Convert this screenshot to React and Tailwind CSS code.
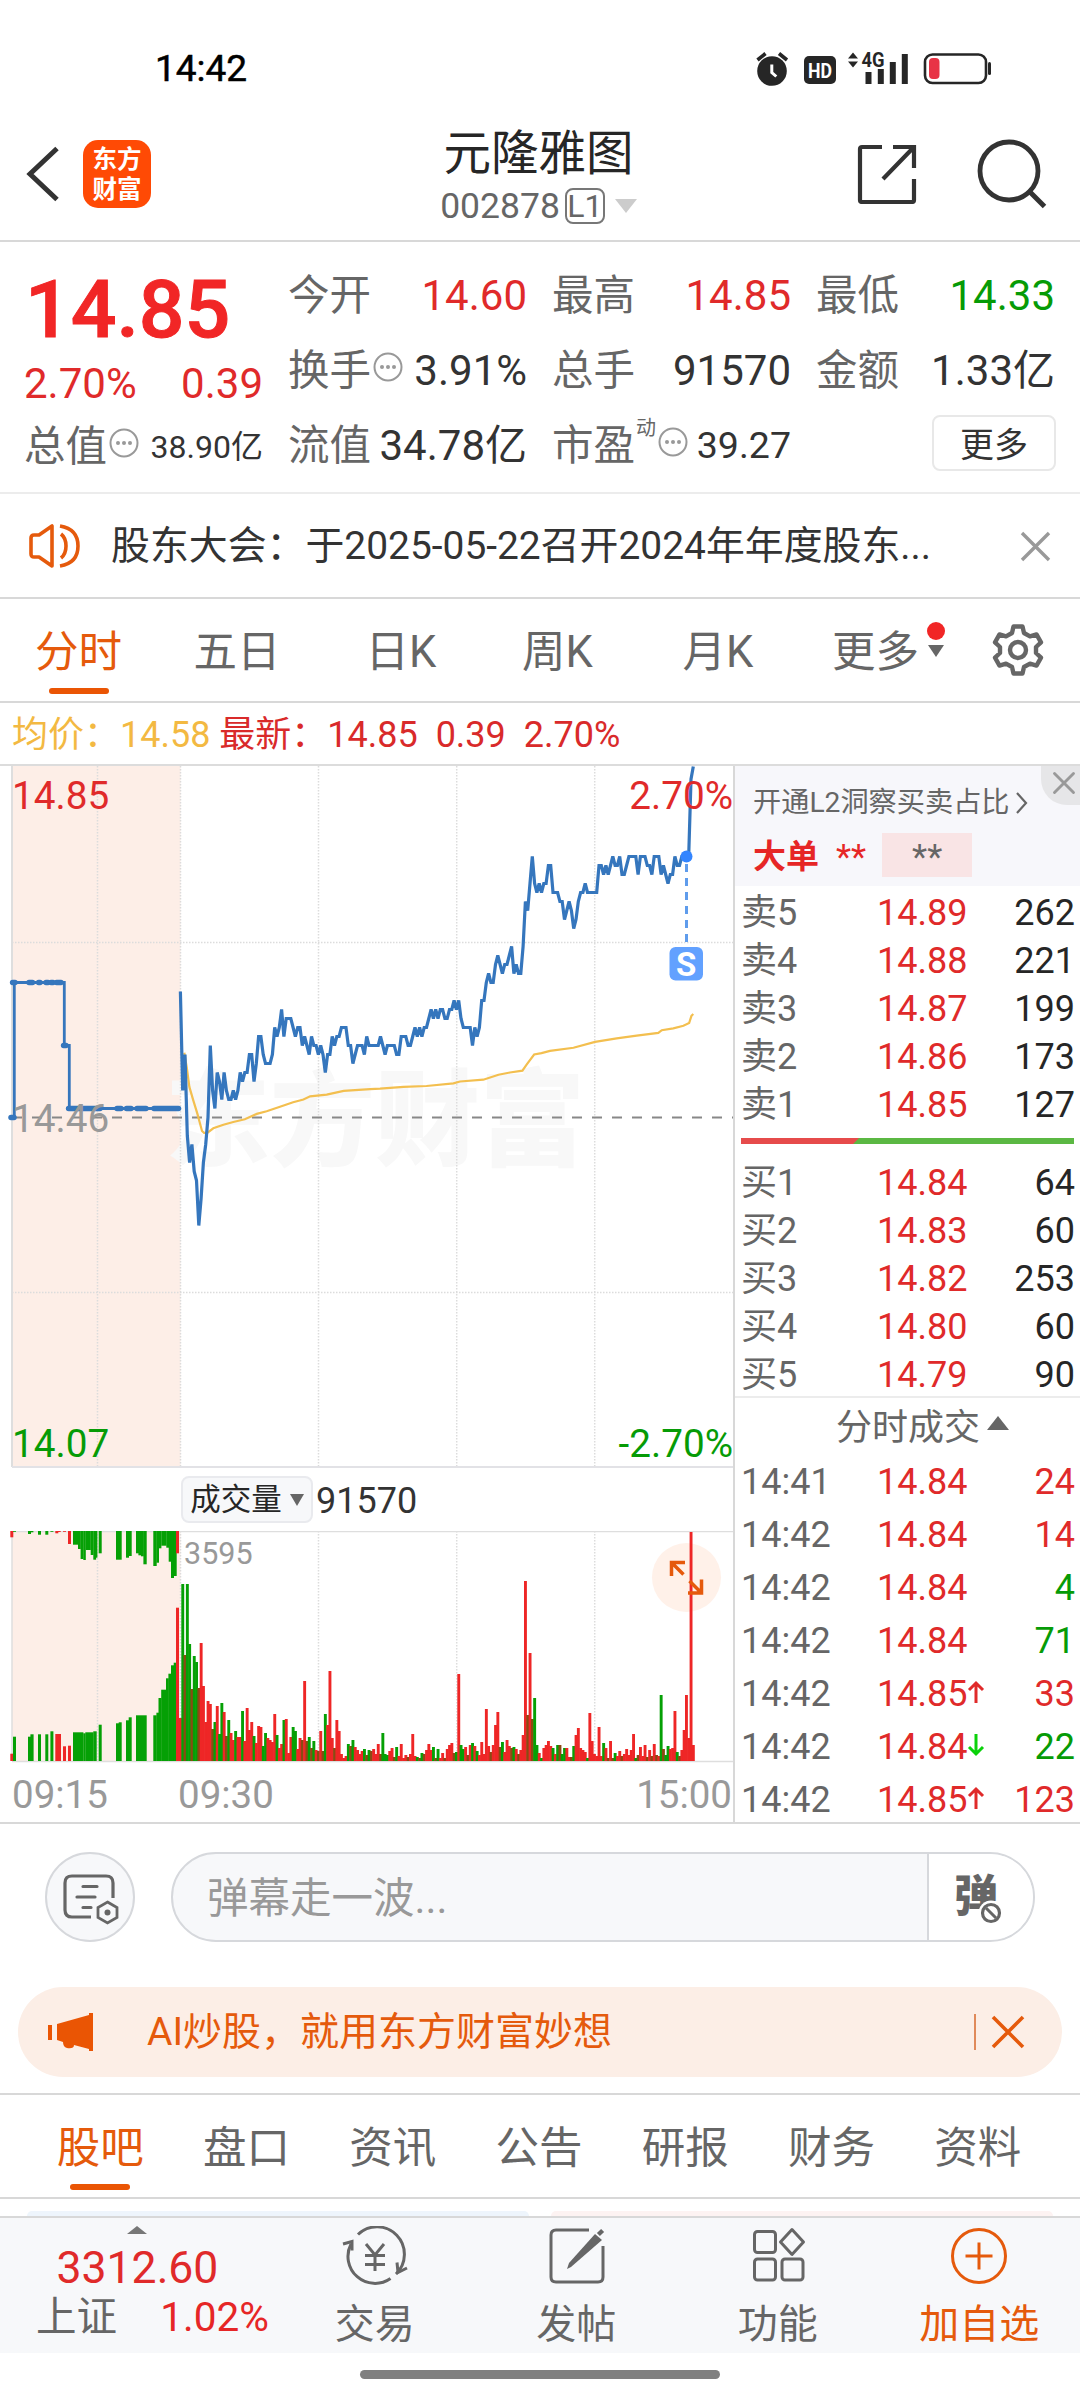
import { FiX } from 'react-icons/fi'

const quoteColumns = [
  [
    { label: '今开', value: '14.60', color: 'text-[#e02a2a]' },
    { label: '换手', value: '3.91%', color: 'text-[#333]', info: true },
    { label: '流值', value: '34.78亿', color: 'text-[#333]' },
  ],
  [
    { label: '最高', value: '14.85', color: 'text-[#e02a2a]' },
    { label: '总手', value: '91570', color: 'text-[#333]' },
    { label: '市盈', value: '39.27', color: 'text-[#333]', info: true, sup: '动', small: true },
  ],
  [
    { label: '最低', value: '14.33', color: 'text-[#069b06]' },
    { label: '金额', value: '1.33亿', color: 'text-[#333]' },
  ],
]

const asks = [
  ['卖5', '14.89', '262'],
  ['卖4', '14.88', '221'],
  ['卖3', '14.87', '199'],
  ['卖2', '14.86', '173'],
  ['卖1', '14.85', '127'],
]

const bids = [
  ['买1', '14.84', '64'],
  ['买2', '14.83', '60'],
  ['买3', '14.82', '253'],
  ['买4', '14.80', '60'],
  ['买5', '14.79', '90'],
]

const trades = [
  { time: '14:41', price: '14.84', volume: '24', buy: true },
  { time: '14:42', price: '14.84', volume: '14', buy: true },
  { time: '14:42', price: '14.84', volume: '4' },
  { time: '14:42', price: '14.84', volume: '71' },
  { time: '14:42', price: '14.85', volume: '33', buy: true, move: 'up' },
  { time: '14:42', price: '14.84', volume: '22', move: 'down' },
  { time: '14:42', price: '14.85', volume: '123', buy: true, move: 'up' },
]

// price per minute, in cents above the previous close
const ticks = [
  14, 3, 7, -2, -5, -3, -6, -7, -12, -9, -5, -3, 0, 8, 3, 1, 5, 4, 2, 5, 3, 2, 2, 3, 2, 3, 5, 4, 5, 5,
  7, 7, 4, 6, 9, 9, 7, 6, 6, 6, 7, 10, 9, 10, 12, 9, 11, 11, 11, 10, 9, 10, 10, 8, 9, 8, 7, 9, 8, 8,
  7, 8, 7, 5, 7, 7, 9, 8, 9, 9, 10, 10, 10, 8, 8, 6, 7, 8, 8, 8, 7, 9, 8, 8, 8, 8, 8, 9, 8, 7,
  8, 8, 8, 8, 7, 7, 9, 9, 9, 8, 8, 9, 10, 9, 10, 9, 10, 10, 11, 12, 11, 12, 11, 12, 12, 11, 11, 12, 12, 13,
  12, 13, 11, 10, 10, 10, 10, 8, 10, 9, 10, 13, 13, 15, 16, 15, 15, 17, 18, 17, 16, 17, 17, 18, 19, 16, 17, 16, 16, 19,
  24, 23, 26, 29, 26, 25, 26, 25, 26, 26, 28, 28, 25, 25, 25, 24, 24, 22, 23, 24, 23, 21, 22, 24, 25, 25, 26, 25, 25, 25,
  25, 25, 28, 28, 27, 28, 27, 28, 29, 28, 28, 29, 27, 27, 28, 29, 29, 29, 29, 27, 29, 29, 29, 28, 28, 27, 29, 29, 29, 27,
  28, 27, 26, 27, 27, 29, 28, 28, 29, 29, 29, 29, 37.6, 39,
]

const average = [
  [1.7, 7.2], [2.8, 5.5], [3.9, 3.4], [5.6, 1.9], [7.4, 0.4], [9.4, -1.5], [10.3, -1.7], [11.7, -1.7],
  [14.3, -1.2], [18.7, -0.8], [23, -0.5], [28, -0.2], [33.2, 0.4], [37.5, 0.7], [43.3, 1.2], [49, 1.7],
  [53.5, 2], [56.4, 2.35], [63.6, 2.55], [71, 2.95], [82.5, 3.15], [86.8, 3.2], [97, 3.4], [107, 3.5],
  [118.7, 3.8], [121.6, 4], [131.7, 4.2], [138.3, 4.75], [143.3, 5], [148.7, 5.2], [150.6, 5.9],
  [153.8, 7], [157, 7.15], [160.7, 7.4], [170.9, 7.75], [180.3, 8.4], [189.7, 8.8], [198.4, 9.1],
  [207.8, 9.4], [209.3, 9.7], [214.3, 9.9], [218.7, 10.2], [221.2, 10.5], [222.2, 11.3], [223, 11.5],
]

// r = up, g = down, b = down bar partly covered by its neighbour
const volumes =
  'r43 g177 b106 g177 g117 b72 g105 g99 b73 r118 r75 r39 r60 r57 b32 g39 r55 g27 g58 r49 b25 g41 r28 r21 g30 r24 r24 g50 r20 r53 ' +
  'r31 r39 g25 r18 r35 r34 g15 g28 r23 r21 r19 r47 g26 r13 r17 g41 r42 r8 r24 g34 g30 r12 r23 b21 r80 b20 g24 b13 g20 r11 ' +
  'b10 r30 b10 g47 r36 r90 r23 b13 r41 r30 r7 r3 r5 g17 b15 g21 r14 r11 r7 r10 g12 b6 g11 b10 r12 r7 r17 b7 g28 g7 ' +
  'g6 r10 r13 b4 g14 r5 r17 r3 r6 b4 r7 r27 r5 g4 b3 g8 b7 r11 r17 r11 g14 b3 g12 r3 r8 b3 r12 r16 r18 b8 ' +
  'g9 r87 g16 g12 r14 b6 r16 g18 r15 g10 r6 r19 r7 r52 r15 b9 r16 r36 r49 b14 g19 r9 r21 r15 b13 g14 r12 b7 r11 r26 ' +
  'r180 b46 r108 b42 g63 g16 r8 g3 r13 r16 r20 r15 g13 r7 g16 b16 g7 g13 r13 r4 b4 g15 r26 r33 r13 r11 r9 g3 r48 r20 ' +
  'r7 r5 r34 r5 g18 r13 b3 r20 b3 g8 r5 r10 b5 r7 r12 r6 r11 r27 g3 b6 r14 r5 r16 b4 r11 b5 r17 b6 r5 g66 ' +
  'b12 g6 g15 r12 r13 r50 g9 b5 r11 r31 r66 r23 r229 r16'

const barColors = { r: '#ee2626', g: '#05a005', b: '#8b4a12' }

// call auction bars: [color, x, width, height]
const auctionMatched = [
  ['r', 10.3, 3, 7.3], ['g', 13, 3, 24.3], ['g', 28, 3, 24.3], ['g', 30.4, 3.2, 26.7], ['g', 38, 3, 26.7],
  ['g', 45.3, 3, 26.7], ['g', 50.4, 3, 29.7], ['r', 55.3, 5.7, 27], ['r', 63, 3, 14.7], ['r', 68, 3, 15.3],
  ['g', 73, 10.4, 28.7], ['g', 83.3, 2.2, 27.7], ['g', 85.3, 8.2, 28.7], ['g', 93.3, 3.4, 29.7],
  ['g', 98.7, 3, 36.3], ['g', 116, 3, 37.7], ['g', 118.7, 3, 38.7], ['g', 126, 3, 40.7], ['g', 128.7, 3, 43.7],
  ['g', 136, 10.7, 45.7], ['g', 153.3, 3.4, 45.7], ['g', 156.4, 2.6, 48.3], ['g', 158.5, 3, 63],
  ['g', 161.2, 5, 71.3], ['g', 166, 2.8, 82.7], ['g', 168.4, 3, 87.3], ['g', 171, 3, 95.7],
  ['g', 173.7, 2.8, 98.3], ['r', 176, 3, 153.3],
]

const auctionUnmatched = [
  ['r', 10.3, 3, 6.3], ['g', 13, 3, 0.8], ['g', 28, 3, 3], ['g', 30.4, 3, 1.3], ['g', 38, 3, 3.7],
  ['g', 45.3, 3, 3.7], ['g', 50.4, 3, 0.8], ['r', 55.3, 3, 2.3], ['r', 58, 2.7, 1], ['r', 63, 3, 0.8],
  ['r', 68, 3, 13], ['g', 73, 5.2, 13.7], ['g', 78, 2.8, 18], ['g', 80.6, 2.9, 28], ['g', 83.3, 2.5, 29],
  ['g', 85.7, 5.1, 19], ['g', 90.7, 2.8, 24], ['g', 93.3, 2.8, 28.7], ['g', 96, 1.4, 26.7],
  ['g', 98.7, 3, 22.3], ['g', 116, 5.7, 28.7], ['g', 126, 3, 26.7], ['g', 128.7, 3, 25],
  ['g', 136, 3, 22.3], ['g', 138.4, 2.8, 24.3], ['g', 141, 2.8, 25.3], ['g', 143.4, 3.3, 33.3],
  ['g', 153.3, 3.4, 35], ['g', 156.4, 2.6, 31.7], ['g', 158.6, 2.8, 17.3], ['g', 161.3, 5.2, 14.7],
  ['g', 166.3, 2.8, 16.7], ['g', 168.7, 2.8, 30.7], ['g', 171, 3, 47], ['g', 173.7, 3, 45], ['r', 176, 3, 22.3],
]

// thick parts of the auction line, where an order was matched: [x1, x2, cents]
const auctionDots = [
  [12.6, 15, 15], [29, 32.5, 15], [38.6, 40, 15], [46, 48, 15], [51, 53, 15], [56.5, 61, 15],
  [63.6, 66, 8], [68.6, 100, 1], [117, 121, 1], [126.5, 131, 1], [137, 146, 1], [154, 178.5, 1],
  [11, 14, 0],
]

const toX = (minute) => 180.4 + minute * 2.3
const toY = (cents) => 351.5 - cents * 9

const pricePoints = ticks.map((t, i) => `${toX(i)},${toY(t)}`).join(' ')
const averagePoints = average.map(([m, t]) => `${toX(m)},${toY(t)}`).join(' ')

function StatusBar() {
  return (
    <div className="flex h-28 items-end justify-between pb-6 pl-[155px] pr-[88px]">
      <div className="text-[37px] leading-[38px] text-black [-webkit-text-stroke:0.5px_black]">14:42</div>
      <svg width="236" height="38" viewBox="756 50 236 38" className="text-[#262626]">
        <circle cx="772" cy="71" r="14.800" fill="currentColor" />
        <path d="M757.500 60l8-6.500M779 53.500l8 6.500" stroke="currentColor" strokeWidth="3.6" />
        <path d="M771.800 64.500v8l4.500 4" fill="none" stroke="#fff" strokeWidth="3" />
        <rect x="804" y="56" width="32" height="28" rx="5" fill="currentColor" />
        <text x="808" y="77.500" fontSize="21" fontWeight="700" textLength="24" lengthAdjust="spacingAndGlyphs" fill="#fff">HD</text>
        <path d="M848 58.500l5-6 5 6zM848 61.500l5 6 5-6z" fill="currentColor" />
        <text x="861.500" y="67" fontSize="20" fontWeight="700" textLength="23" lengthAdjust="spacingAndGlyphs" fill="currentColor">4G</text>
        <path d="M868.500 72v12M880.800 69v15M892.800 62v22M904.800 54v30" stroke="currentColor" strokeWidth="6" />
        <rect x="925" y="54.500" width="61" height="28.500" rx="7.500" fill="#fff" stroke="currentColor" strokeWidth="2.600" />
        <rect x="929" y="58" width="10.500" height="21" rx="4" fill="#e83346" />
        <path d="M989.500 63.500v10" stroke="currentColor" strokeWidth="3" strokeLinecap="round" />
      </svg>
    </div>
  )
}

function Header() {
  return (
    <header className="flex h-[130px] items-center justify-between border-b-2 border-[#d8d8d8] pl-[26px] pr-[33px]">
      <div className="flex w-[200px] items-center pb-1">
        <svg width="34" height="56" viewBox="0 0 34 56" fill="none" stroke="#333" strokeWidth="5">
          <path d="M31 2.500L4 28l27 25.500" />
        </svg>
        <div className="ml-[23px] flex h-[68px] w-[68px] flex-col items-center justify-center rounded-[15px] bg-[#ff4a05] pt-[2px] text-[24.5px] font-bold leading-[30px] text-white">
          <span>东方</span>
          <span>财富</span>
        </div>
      </div>
      <div className="flex flex-col items-center pl-1 pt-[2px]">
        <div className="text-[47.5px] leading-[58px] text-[#262626]">元隆雅图</div>
        <div className="flex items-center text-[35.5px] leading-[46px] text-[#666]">
          002878
          <span className="ml-[5px] flex h-9 w-10 items-center justify-center rounded-lg border-2 border-[#777] text-[32px] leading-none">L1</span>
          <span className="ml-[10px] border-x-[11px] border-t-[14px] border-x-transparent border-t-[#ccc]"></span>
        </div>
      </div>
      <div className="flex w-[200px] items-center justify-end pb-1">
        <svg width="60" height="60" viewBox="0 0 60 60" fill="none" stroke="#333" strokeWidth="4.200">
          <path d="M25 3H5Q3 3 3 5v51q0 2 2 2h50q2 0 2-2V35M36 3h21v21M57 3L26 35" />
        </svg>
        <svg width="70" height="70" viewBox="0 0 70 70" fill="none" stroke="#333" strokeWidth="4.800" className="ml-[60px]">
          <circle cx="32" cy="32" r="29" />
          <path d="M52.500 52.500l15 15" strokeWidth="5" />
        </svg>
      </div>
    </header>
  )
}

function InfoDots() {
  return (
    <svg width="30" height="30" viewBox="0 0 30 30" className="mb-[8px] shrink-0">
      <circle cx="15" cy="15" r="13.500" fill="none" stroke="#999" strokeWidth="2" />
      <circle cx="9" cy="15" r="2" fill="#999" />
      <circle cx="15" cy="15" r="2" fill="#999" />
      <circle cx="21" cy="15" r="2" fill="#999" />
    </svg>
  )
}

function QuoteCell({ cell }) {
  return (
    <div className="flex h-[75px] items-center leading-none">
      <span className="-ml-px pt-px text-[41.5px] text-[#666]">{cell.label}</span>
      {cell.sup && <span className="mb-9 ml-px text-[20px] text-[#666]">{cell.sup}</span>}
      {cell.info && <span className="ml-[2px]"><InfoDots /></span>}
      <span className={`ml-auto ${cell.small ? 'text-[37.500px]' : 'text-[42px]'} ${cell.color}`}>{cell.value}</span>
    </div>
  )
}

function Quote() {
  return (
    <section className="grid h-[252px] grid-cols-4 gap-x-[26px] border-b-2 border-[#ececec] px-[25px] pt-[16px]">
      <div>
        <div className="flex h-[100px] items-center pt-1 text-[80.500px] font-medium leading-none text-[#f12626] [-webkit-text-stroke:1px_#f12626]">14.85</div>
        <div className="flex h-[51px] items-center justify-between text-[42px] leading-none text-[#e02a2a]">
          <span className="-ml-px">2.70%</span>
          <span>0.39</span>
        </div>
        <div className="flex h-[75px] items-center leading-none">
          <span className="-ml-px pt-px text-[41.5px] text-[#666]">总值</span>
          <span className="ml-[2px]"><InfoDots /></span>
          <span className="ml-auto text-[32px] text-[#333]">38.90亿</span>
        </div>
      </div>
      {quoteColumns.map((cells, i) => (
        <div key={i}>
          {cells.map((cell) => (
            <QuoteCell key={cell.label} cell={cell} />
          ))}
          {i === 2 && (
            <button className="-mr-px ml-auto mt-[7px] block h-[56px] w-[124px] rounded-lg border-2 border-[#e8e8e8] pt-[3px] text-[34px] leading-none text-[#333]">
              更多
            </button>
          )}
        </div>
      ))}
    </section>
  )
}

function Notice() {
  return (
    <section className="flex h-[105px] items-center border-b-2 border-[#d8d8d8] pl-[29px] pr-[28px]">
      <svg width="52" height="46" viewBox="0 0 52 46" fill="none" stroke="#e55a0c" strokeWidth="3.600">
        <path d="M23 3v40L10 34H5q-3 0-3-3V15q0-3 3-3h5z" strokeLinejoin="round" />
        <path d="M32 11q5 4 5 12t-5 12" />
        <path d="M31 3q18 3 18 20T31 43" />
      </svg>
      <span className="ml-[30px] whitespace-nowrap pt-[2px] text-[38.900px] leading-none text-[#333]">
        股东大会：于2025-05-22召开2024年年度股东...
      </span>
      <svg width="34" height="34" viewBox="0 0 34 34" stroke="#999" strokeWidth="3.400" className="ml-auto">
        <path d="M4 4l27 27M31 4L4 31" />
      </svg>
    </section>
  )
}

function ChartTabs() {
  return (
    <nav className="flex h-[104px] items-center border-b-2 border-[#d8d8d8] text-[43.500px] leading-none text-[#666]">
      <div className="relative flex h-full w-[157px] items-center justify-center pt-[5px] text-[#e55a0c]">
        分时
        <span className="absolute bottom-[7px] h-[6px] w-[60px] rounded-full bg-[#ea5504]"></span>
      </div>
      <div className="w-[160px] pt-[5px] text-center">五日</div>
      <div className="w-[168px] pt-[5px] text-center">日K</div>
      <div className="w-[145px] pt-[5px] text-center">周K</div>
      <div className="w-[176px] pt-[5px] text-center">月K</div>
      <div className="relative ml-[26px] flex items-center pt-[5px]">
        更多
        <span className="mb-1 ml-[9px] border-x-[8px] border-t-[12px] border-x-transparent border-t-[#666]"></span>
        <span className="absolute -top-1 right-[-1px] h-[18px] w-[18px] rounded-full bg-[#f12626]"></span>
      </div>
      <svg width="54" height="54" viewBox="0 0 54 54" fill="none" stroke="#666" strokeWidth="4.400" className="ml-auto mr-[35px]">
        <path
          d="M22.500 3.500h9l1.500 6.500 6 3.400 6.500-2 4.500 8-5 4.600v6l5 4.600-4.500 8-6.500-2-6 3.400-1.500 6.500h-9l-1.500-6.500-6-3.400-6.500 2-4.500-8 5-4.600v-6l-5-4.600 4.500-8 6.500 2 6-3.400z"
          strokeLinejoin="round"
        />
        <circle cx="27" cy="27" r="8" />
      </svg>
    </nav>
  )
}

function PriceChart() {
  return (
    <svg width="734" height="702" viewBox="0 0 734 702" className="block">
      <rect x="12" y="0" width="168.500" height="701" fill="#fdeee7" />
      <text x="165" y="391" fontSize="105" fontWeight="900" fill="#f8f8f8">东方财富</text>
      <g stroke="#dcdcdc" strokeWidth="1.500" strokeDasharray="1.500 1.500">
        <path d="M97.500 0v701M180.500 0v701M318.500 0v701M456.700 0v701M594.700 0v701" />
        <path d="M12 176.500h721M12 526.500h721" />
      </g>
      <path d="M12 0v701" stroke="#dedede" strokeWidth="2" />
      <path d="M12 701h721" stroke="#e2e2e6" strokeWidth="2" />
      <path d="M12 351.500h721" stroke="#888" strokeWidth="2" strokeDasharray="10 10" />
      <polyline points={averagePoints} fill="none" stroke="#f3bf4f" strokeWidth="2.200" />
      <path
        d={`M12 ${toY(0)}H14.300V${toY(15)}H64.300V${toY(8)}H69.300V${toY(1)}H180`}
        fill="none"
        stroke="#3576bd"
        strokeWidth="2.800"
      />
      {auctionDots.map(([x1, x2, cents]) => (
        <path key={x1} d={`M${x1} ${toY(cents)}H${x2}`} stroke="#3576bd" strokeWidth="5.500" strokeLinecap="round" />
      ))}
      <polyline points={pricePoints} fill="none" stroke="#3576bd" strokeWidth="3.200" />
      <circle cx="686.500" cy="90.500" r="6" fill="#3385ff" />
      <path d="M686.500 98v83" stroke="#5f9cec" strokeWidth="3" strokeDasharray="8 6" />
      <rect x="669.500" y="181" width="33.500" height="33.500" rx="6" fill="#62a1ff" />
      <text x="686.200" y="210" fontSize="33" fontWeight="700" textAnchor="middle" fill="#fff">S</text>
      <g fontSize="38.700">
        <text x="12" y="42.500" fill="#e02a2a">14.85</text>
        <text x="12" y="366" fill="#999">14.46</text>
        <text x="12" y="691" fill="#069b06">14.07</text>
        <text x="733" y="42.500" textAnchor="end" fill="#e02a2a">2.70%</text>
        <text x="733" y="691" textAnchor="end" fill="#069b06">-2.70%</text>
      </g>
    </svg>
  )
}

function VolumeChart() {
  return (
    <svg width="734" height="232" viewBox="0 0 734 232" className="block">
      <rect x="12" y="0" width="168.500" height="230" fill="#fdeee7" />
      <path
        d="M97.500 0v230M180.500 0v230M318.500 0v230M456.700 0v230M594.700 0v230"
        stroke="#dcdcdc"
        strokeWidth="1.500"
        strokeDasharray="1.500 1.500"
      />
      <path d="M12 .500h721M12 230.500h721M12 0v230" stroke="#dedede" strokeWidth="1.500" />
      <circle cx="686.500" cy="46.500" r="34.500" fill="#fff1e9" />
      {auctionUnmatched.map(([c, x, w, h]) => (
        <rect key={x} x={x} y="0" width={w} height={h} fill={barColors[c]} />
      ))}
      {auctionMatched.map(([c, x, w, h]) => (
        <rect key={x} x={x} y={230 - h} width={w} height={h} fill={barColors[c]} />
      ))}
      {volumes.split(' ').map((bar, i) => {
        const height = Number(bar.slice(1))
        return <rect key={i} x={toX(i) - 1.4} y={230 - height} width="2.900" height={height} fill={barColors[bar[0]]} />
      })}
      <text x="184" y="33" fontSize="30.500" fill="#999">3595</text>
      <g fill="none" stroke="#e55a0c" strokeWidth="3.500">
        <path d="M671.500 45V31.500H685M672 32l11.500 11.500" />
        <path d="M688 62h13.500V48.500M689.500 50L701 61.500" />
      </g>
    </svg>
  )
}

function ChartColumn() {
  return (
    <div className="w-[735px] border-r-2 border-[#d8d8d8]">
      <PriceChart />
      <div className="flex h-[63px] items-center pl-[181px] leading-none">
        <div className="flex h-[47px] w-[132px] items-center justify-center rounded-lg border-2 border-[#e9eaee] bg-[#f7f8fa] pt-[2px] text-[30.500px] text-[#262626]">
          成交量
          <span className="mb-[2px] ml-[8px] border-x-[7px] border-t-[12px] border-x-transparent border-t-[#666]"></span>
        </div>
        <span className="ml-[3px] pt-[2px] text-[36px] text-[#333]">91570</span>
      </div>
      <VolumeChart />
      <div className="relative flex justify-between pl-3 pr-px pt-[13px] text-[38.5px] leading-none text-[#999]">
        <span>09:15</span>
        <span className="absolute left-[178px]">09:30</span>
        <span>15:00</span>
      </div>
    </div>
  )
}

function BookRow({ row }) {
  return (
    <div className="flex h-12 items-center pl-[6px] pr-[5px] text-[36px] leading-none">
      <span className="w-[136px] text-[#666]">{row[0]}</span>
      <span className="text-[#e02a2a]">{row[1]}</span>
      <span className="ml-auto text-[#262626]">{row[2]}</span>
    </div>
  )
}

function OrderBook() {
  return (
    <div className="min-w-0 flex-1">
      <div className="relative h-[120px] bg-[#f7f7fb] pl-[18px] pt-[22px]">
        <div className="flex items-center text-[28.2px] leading-[30px] text-[#666]">
          开通L2洞察买卖占比
          <svg width="12" height="22" viewBox="0 0 12 22" fill="none" stroke="#666" strokeWidth="2.200" className="ml-[6px]">
            <path d="M1 1l9 10-9 10" />
          </svg>
        </div>
        <div className="mt-[15px] flex h-11 items-center leading-none">
          <span className="pt-[2px] text-[33px] font-bold text-[#e62626]">大单</span>
          <span className="ml-[17px] pt-1 text-[35px] text-[#e62626]">**</span>
          <span className="ml-[16px] flex h-9 w-[90px] items-center justify-center bg-[#f9e4e5] pt-1 text-[35px] text-[#666] min-h-11">**</span>
        </div>
        <span className="absolute right-0 top-0 flex h-[39px] w-[39px] items-center justify-center rounded-bl-[26px] bg-[#e6e6e8] pb-[6px] pl-[6px] text-[#999]">
          <FiX size={38} strokeWidth={1.8} className="shrink-0" />
        </span>
      </div>
      <div className="pt-[3px]">
        {asks.map((row) => (
          <BookRow key={row[0]} row={row} />
        ))}
      </div>
      <div className="mb-[15px] ml-[6px] mr-[6px] mt-[9px] flex h-[6px] bg-[#5bb843]">
        <span className="w-[118px] bg-[#e64b4b] [clip-path:polygon(0_0,100%_0,95%_100%,0_100%)]"></span>
      </div>
      {bids.map((row) => (
        <BookRow key={row[0]} row={row} />
      ))}
      <div className="-mt-[3px] flex h-[59px] items-center justify-center border-t-2 border-[#ececec] pl-[32px] pr-[2px] pt-[2px] text-[36px] leading-none text-[#666]">
        分时成交
        <span className="mb-[9px] ml-[7px] border-x-[11px] border-b-[14px] border-x-transparent border-b-[#666]"></span>
      </div>
      {trades.map((trade, i) => (
        <div key={i} className="flex h-[53px] items-center pl-[6px] pr-[5px] text-[36px] leading-none">
          <span className="w-[136px] text-[#666]">{trade.time}</span>
          <span className="text-[#e02a2a]">{trade.price}</span>
          {trade.move === 'up' && (
            <svg width="18" height="24" viewBox="0 0 18 24" fill="none" stroke="#e02a2a" strokeWidth="3" className="mb-1">
              <path d="M9 23V3M2 10l7-7 7 7" />
            </svg>
          )}
          {trade.move === 'down' && (
            <svg width="18" height="24" viewBox="0 0 18 24" fill="none" stroke="#0ad20a" strokeWidth="3" className="mb-1">
              <path d="M9 1v20M2 14l7 7 7-7" />
            </svg>
          )}
          <span className={`ml-auto ${trade.buy ? 'text-[#e02a2a]' : 'text-[#069b06]'}`}>{trade.volume}</span>
        </div>
      ))}
    </div>
  )
}

function Danmaku() {
  return (
    <section className="flex items-center pl-[45px] pr-[45px] pt-[28px]">
      <div className="flex h-[90px] w-[90px] items-center justify-center rounded-full border-2 border-[#d6d8dc] bg-[#f7f8fa]">
        <svg width="56" height="54" viewBox="0 0 56 54" fill="none" stroke="#666" strokeWidth="3.200" className="ml-[2px] mt-[6px]">
          <path d="M28 44H9q-7 0-7-7V10q0-7 7-7h34q7 0 7 7v15" />
          <path d="M20 13.500h14M14 24h18M20 34.500h8" strokeLinecap="round" />
          <path d="M44.500 29l9.500 5.500v10L44.500 50 35 44.500v-10z" strokeWidth="2.800" />
          <circle cx="44.500" cy="39.500" r="3" fill="#666" stroke="none" />
        </svg>
      </div>
      <div className="ml-9 flex h-[90px] flex-1 overflow-hidden rounded-full border-2 border-[#d6d8dc] bg-[#f7f8fa]">
        <div className="flex flex-1 items-center pl-[34px] pt-1 text-[41.5px] leading-none text-[#999]">弹幕走一波...</div>
        <div className="flex w-[106px] items-center border-l-2 border-[#d6d8dc] bg-white pl-[25px]">
          <div className="relative text-[44px] font-black leading-none text-[#666]">
            弹
            <svg width="26" height="26" viewBox="0 0 26 26" className="absolute -bottom-[7px] -right-[6px]">
              <circle cx="13" cy="13" r="12.500" fill="#fff" />
              <circle cx="13" cy="13" r="8.500" fill="#fff" stroke="#666" strokeWidth="3.200" />
              <path d="M8 8l10 10" stroke="#666" strokeWidth="3" />
            </svg>
          </div>
        </div>
      </div>
    </section>
  )
}

function Banner() {
  return (
    <section className="mx-[18px] mt-[45px] flex h-[90px] items-center rounded-full bg-[#fceee6] pl-[30px] pr-[37px] text-[#e55a0c]">
      <svg width="46" height="40" viewBox="0 0 46 40" fill="#ea5504">
        <path d="M0 13h4v15H0zM9 12L41 3V1h4v38h-4v-2l-15-4q0 4-7 3-4-1-4-6l-6-2z" />
      </svg>
      <span className="ml-[53px] pt-px text-[39px] leading-none">AI炒股，就用东方财富妙想</span>
      <span className="ml-auto h-9 w-[2px] bg-[#e08a5a]"></span>
      <svg width="34" height="34" viewBox="0 0 34 34" stroke="#e55a0c" strokeWidth="3.600" className="ml-[15px]">
        <path d="M2 2l30 30M32 2L2 32" />
      </svg>
    </section>
  )
}

function SectionTabs() {
  const tabs = ['股吧', '盘口', '资讯', '公告', '研报', '财务', '资料']
  return (
    <nav className="mt-4 grid h-[106px] grid-cols-7 border-y-2 border-[#d8d8d8] pl-[27px] pr-[29px] text-[43.500px] leading-none text-[#666]">
      {tabs.map((tab, i) => (
        <div
          key={tab}
          className={`relative flex items-center justify-center pt-[5px] ${i === 0 ? 'text-[#e55a0c]' : ''}`}
        >
          {tab}
          {i === 0 && <span className="absolute bottom-[7px] h-[6px] w-[60px] rounded-full bg-[#ea5504]"></span>}
        </div>
      ))}
    </nav>
  )
}

const actions = [
  {
    label: '交易',
    icon: (
      <>
        <path d="M16 8.500A27 27 0 0 1 54 48M48.500 52.500A27 27 0 0 1 9 18" />
        <path d="M1 18l9-2.500 0 9M65 42l-9 4.500-1-10" />
        <path d="M24 18l9 11 9-11M23 29.500h20M23 38.500h20M33 29v16" />
      </>
    ),
  },
  {
    label: '发帖',
    icon: (
      <>
        <path d="M46 4H13q-5 0-5 5v42q0 5 5 5h42q5 0 5-5V20" />
        <path d="M52 8l7 6-31 27-4 2 2-6z" fill="#666" stroke="none" />
        <path d="M56 5l3 3" strokeWidth="6" />
      </>
    ),
  },
  {
    label: '功能',
    icon: (
      <>
        <rect x="9.500" y="5.500" width="21" height="21" rx="3" />
        <rect x="9.500" y="33" width="21" height="21" rx="3" />
        <rect x="37" y="33" width="21" height="21" rx="3" />
        <path d="M47 3.500l11.500 12.500L47 28.500 35.500 16z" strokeLinejoin="round" />
      </>
    ),
  },
  {
    label: '加自选',
    active: true,
    icon: (
      <>
        <circle cx="33" cy="30" r="26.500" />
        <path d="M33 16.500v27M19.500 30h27" />
      </>
    ),
  },
]

function BottomBar() {
  return (
    <footer className="flex h-[137px] border-t-2 border-[#d8d8d8] bg-[#f7f8fa]">
      <div className="flex w-[274px] flex-col items-center pt-2 leading-none">
        <span className="border-x-[10px] border-b-[8px] border-x-transparent border-b-[#777]"></span>
        <span className="mt-[12px] pl-px text-[44.5px] text-[#e02a2a]">3312.60</span>
        <div className="mt-[6px] flex w-full justify-between pl-9 pr-[5px] text-[40.5px]">
          <span className="text-[#666]">上证</span>
          <span className="text-[#e62626]">1.02%</span>
        </div>
      </div>
      {actions.map((action) => (
        <div key={action.label} className="flex flex-1 flex-col items-center pt-2">
          <svg
            width="66"
            height="60"
            viewBox="0 0 66 60"
            fill="none"
            stroke={action.active ? '#e55a0c' : '#666'}
            strokeWidth="3"
          >
            {action.icon}
          </svg>
          <span className={`mt-[19px] text-[40px] leading-none ${action.active ? 'text-[#e55a0c]' : 'text-[#666]'}`}>
            {action.label}
          </span>
        </div>
      ))}
    </footer>
  )
}

function App() {
  return (
    <div className="h-[2400px] w-[1080px] overflow-hidden bg-white font-['Roboto','Noto_Sans_CJK_SC',sans-serif]">
      <StatusBar />
      <Header />
      <Quote />
      <Notice />
      <ChartTabs />
      <div className="flex h-[63px] items-center whitespace-pre border-b-2 border-[#dcdcdc] pl-3 pt-[2px] text-[36px] leading-none">
        <span className="text-[#f3b942]">均价：14.58 </span>
        <span className="text-[#d92a2a]">最新：14.85  0.39  2.70%</span>
      </div>
      <div className="flex h-[1058px] border-b-2 border-[#d8d8d8]">
        <ChartColumn />
        <OrderBook />
      </div>
      <Danmaku />
      <Banner />
      <SectionTabs />
      <div className="flex h-[17px] gap-[22px] px-[27px] pt-3">
        <div className="flex-1 rounded-t-xl bg-[#eef5fc]"></div>
        <div className="flex-1 rounded-t-xl bg-[#fdf3f2]"></div>
      </div>
      <BottomBar />
      <div className="mx-auto mt-[17px] h-[9px] w-[360px] rounded-full bg-[#808080]"></div>
    </div>
  )
}

export default App
